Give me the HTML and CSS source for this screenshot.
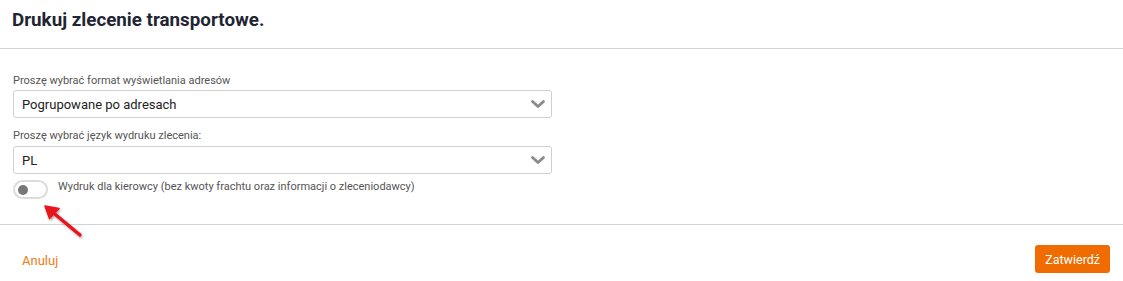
FILE: index.html
```html
<!DOCTYPE html>
<html lang="pl">
<head>
<meta charset="utf-8">
<title>Drukuj zlecenie transportowe</title>
<link rel="stylesheet" href="styles.css">
</head>
<body>
<div class="modal">
  <div class="header">
    <h1 class="title">Drukuj zlecenie transportowe.</h1>
  </div>
  <div class="body">
    <label class="label">Proszę wybrać format wyświetlania adresów</label>
    <div class="select">
      <span>Pogrupowane po adresach</span>
      <svg class="chev" width="16" height="10" viewBox="0 0 16 10"><path d="M2.5 2.5 L8 7.5 L13.5 2.5" fill="none" stroke="#8a8a8a" stroke-width="2.8" stroke-linecap="round" stroke-linejoin="round"/></svg>
    </div>
    <label class="label label-second">Proszę wybrać język wydruku zlecenia:</label>
    <div class="select">
      <span>PL</span>
      <svg class="chev" width="16" height="10" viewBox="0 0 16 10"><path d="M2.5 2.5 L8 7.5 L13.5 2.5" fill="none" stroke="#8a8a8a" stroke-width="2.8" stroke-linecap="round" stroke-linejoin="round"/></svg>
    </div>
    <div class="toggle-row">
      <span class="switch"><span class="knob"></span></span>
      <span class="toggle-label">Wydruk dla kierowcy (bez kwoty frachtu oraz informacji o zleceniodawcy)</span>
    </div>
    <svg class="arrow" width="50" height="42" viewBox="0 0 50 42">
      <defs><filter id="sh" x="-20%" y="-20%" width="150%" height="150%"><feDropShadow dx="1" dy="1.5" stdDeviation="1" flood-color="#000" flood-opacity="0.35"/></filter></defs>
      <g filter="url(#sh)">
        <path d="M42 36 L12 11" stroke="#e8141b" stroke-width="3.5" stroke-linecap="round" fill="none"/>
        <path d="M7 7 L21 9.5 L11.5 19.5 Z" fill="#e8141b" stroke="#e8141b" stroke-width="1.5" stroke-linejoin="round"/>
      </g>
    </svg>
  </div>
  <div class="footer">
    <a class="cancel" href="#">Anuluj</a>
    <button class="confirm" type="button">Zatwierdź</button>
  </div>
</div>
</body>
</html>
```
FILE: styles.css
```css
* { box-sizing: border-box; }
html, body { margin: 0; padding: 0; background: #fff; overflow: hidden; }
body { font-family: Roboto, "Liberation Sans", Arial, sans-serif; color: #333; }
.modal { width: 1123px; height: 281px; }
.header { height: 49px; border-bottom: 1px solid #d4d4d8; padding: 9px 12px 0; }
.title { margin: 0; font-size: 18.8px; font-weight: 700; color: #1f2533; line-height: 22px; }
.body { position: relative; padding: 25px 13px 0; height: 176px; border-bottom: 1px solid #d4d4d8; }
.label { display: block; font-size: 11px; color: #555; line-height: 14px; margin-bottom: 2px; }
.label-second { margin-bottom: 3px; }
.select { width: 539px; height: 28px; border: 1px solid #cfcfcf; border-radius: 3px; display: flex; align-items: center; justify-content: space-between; padding: 0 5px 0 8px; margin-bottom: 11px; font-size: 13px; color: #222; }
.chev { display: block; }
.toggle-row { display: flex; align-items: center; margin-top: -5px; }
.switch { width: 35px; height: 19px; border: 2px solid #dcdcdf; border-radius: 10px; display: flex; align-items: center; padding-left: 3px; }
.knob { width: 10px; height: 10px; border-radius: 50%; background: #777; }
.toggle-label { margin-left: 10px; font-size: 11px; color: #555; line-height: 14px; position: relative; top: -3px; }
.arrow { position: absolute; left: 38px; top: 150px; }
.footer { display: flex; justify-content: space-between; align-items: center; padding: 20px 13px 0 22px; }
.cancel { color: #f07a14; font-size: 13px; text-decoration: none; position: relative; top: 1px; }
.confirm { background: #f06c00; color: #fff; border: none; border-radius: 3px; font-family: inherit; font-size: 12.5px; height: 28px; padding: 0 10px; }
```
